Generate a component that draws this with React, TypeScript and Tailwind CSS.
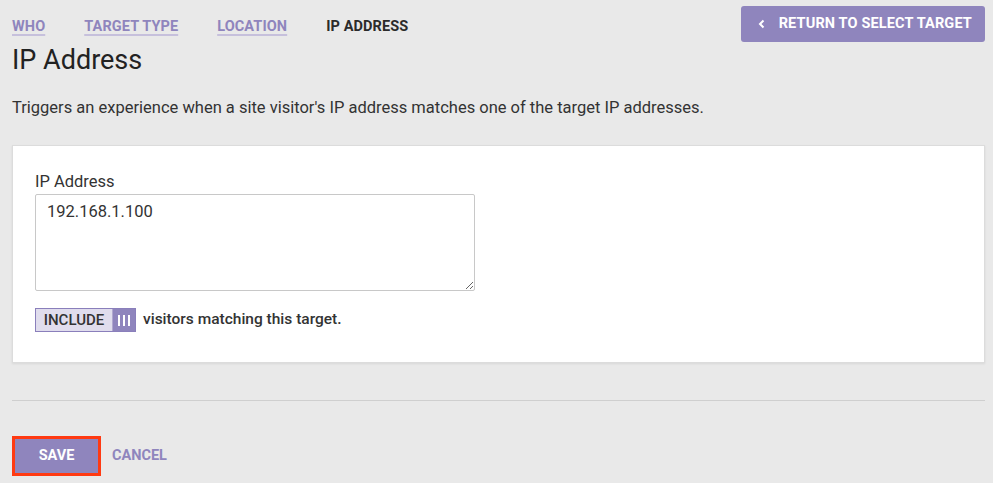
import { useState } from 'react'

const tabs = ['Who', 'Target Type', 'Location']

export default function App() {
  const [ip, setIp] = useState('192.168.1.100')

  return (
    <div className="min-h-[483px] w-full bg-[#e9e9e9] pl-3 pr-2 font-['Roboto',sans-serif] text-[#333]">
      <div className="flex items-start justify-between pt-[6px]">
        <nav className="flex items-center gap-[39px] pt-[10px] text-[14.5px] font-bold uppercase tracking-[0.1px]">
          {tabs.map((t) => (
            <a
              key={t}
              href="#"
              className="text-[#8f85bd] underline decoration-[#c6c0dc] decoration-2 underline-offset-[3px]"
            >
              {t}
            </a>
          ))}
          <span className="text-[#2b2b2b]">IP Address</span>
        </nav>
        <button className="flex h-9 items-center gap-[13px] rounded-[3px] bg-[#8f85bd] pl-[17px] pr-[13px] text-[14.5px] font-bold uppercase tracking-[0.15px] text-white">
          <svg width="8" height="10" viewBox="0 0 8 10" fill="none">
            <path d="M5.5 1.5 2 5l3.5 3.5" stroke="white" strokeWidth="2" />
          </svg>
          Return to Select Target
        </button>
      </div>

      <h1 className="mt-[1px] text-[27px] leading-[34px] text-[#222]">IP Address</h1>

      <p className="mt-[21px] text-[16.5px] leading-5">
        Triggers an experience when a site visitor's IP address matches one of the target IP addresses.
      </p>

      <div className="mt-[27px] h-[218px] border border-[#dcdcdc] bg-white px-[22px] pt-[26px] shadow-[0_1px_2px_rgba(0,0,0,0.08)]">
        <label className="block">
          <span className="block text-[16.5px] leading-5">IP Address</span>
          <textarea
            value={ip}
            onChange={(e) => setIp(e.target.value)}
            className="mt-[2px] block h-[97px] w-[440px] rounded-[2px] border border-[#c8c8c8] px-[11px] py-[7px] text-[16.5px] leading-5 text-[#333] outline-none"
          />
        </label>
        <div className="mt-[17px] flex items-center gap-[7px]">
          <div className="flex h-6 border border-[#8a7fbb]">
            <span className="flex w-[77px] items-center justify-center border-r border-[#b0a8cf] bg-[#e0dded] text-[15px] font-medium text-[#333]">
              INCLUDE
            </span>
            <span className="flex w-[22px] items-center justify-center gap-[3px] bg-[#8f85bd]">
              <span className="h-[11px] w-[2px] bg-white" />
              <span className="h-[11px] w-[2px] bg-white" />
              <span className="h-[11px] w-[2px] bg-white" />
            </span>
          </div>
          <span className="text-[15.5px] font-medium">visitors matching this target.</span>
        </div>
      </div>

      <hr className="mt-[37px] border-t border-[#cfcfcf]" />

      <div className="mt-[35px] flex items-center gap-[11px]">
        <button className="h-[40px] w-[89px] border-[3px] border-[#ff3a12] bg-[#8f85bd] text-[14.5px] font-bold text-white">
          SAVE
        </button>
        <button className="text-[14.5px] font-bold text-[#8f85bd]">CANCEL</button>
      </div>
    </div>
  )
}
